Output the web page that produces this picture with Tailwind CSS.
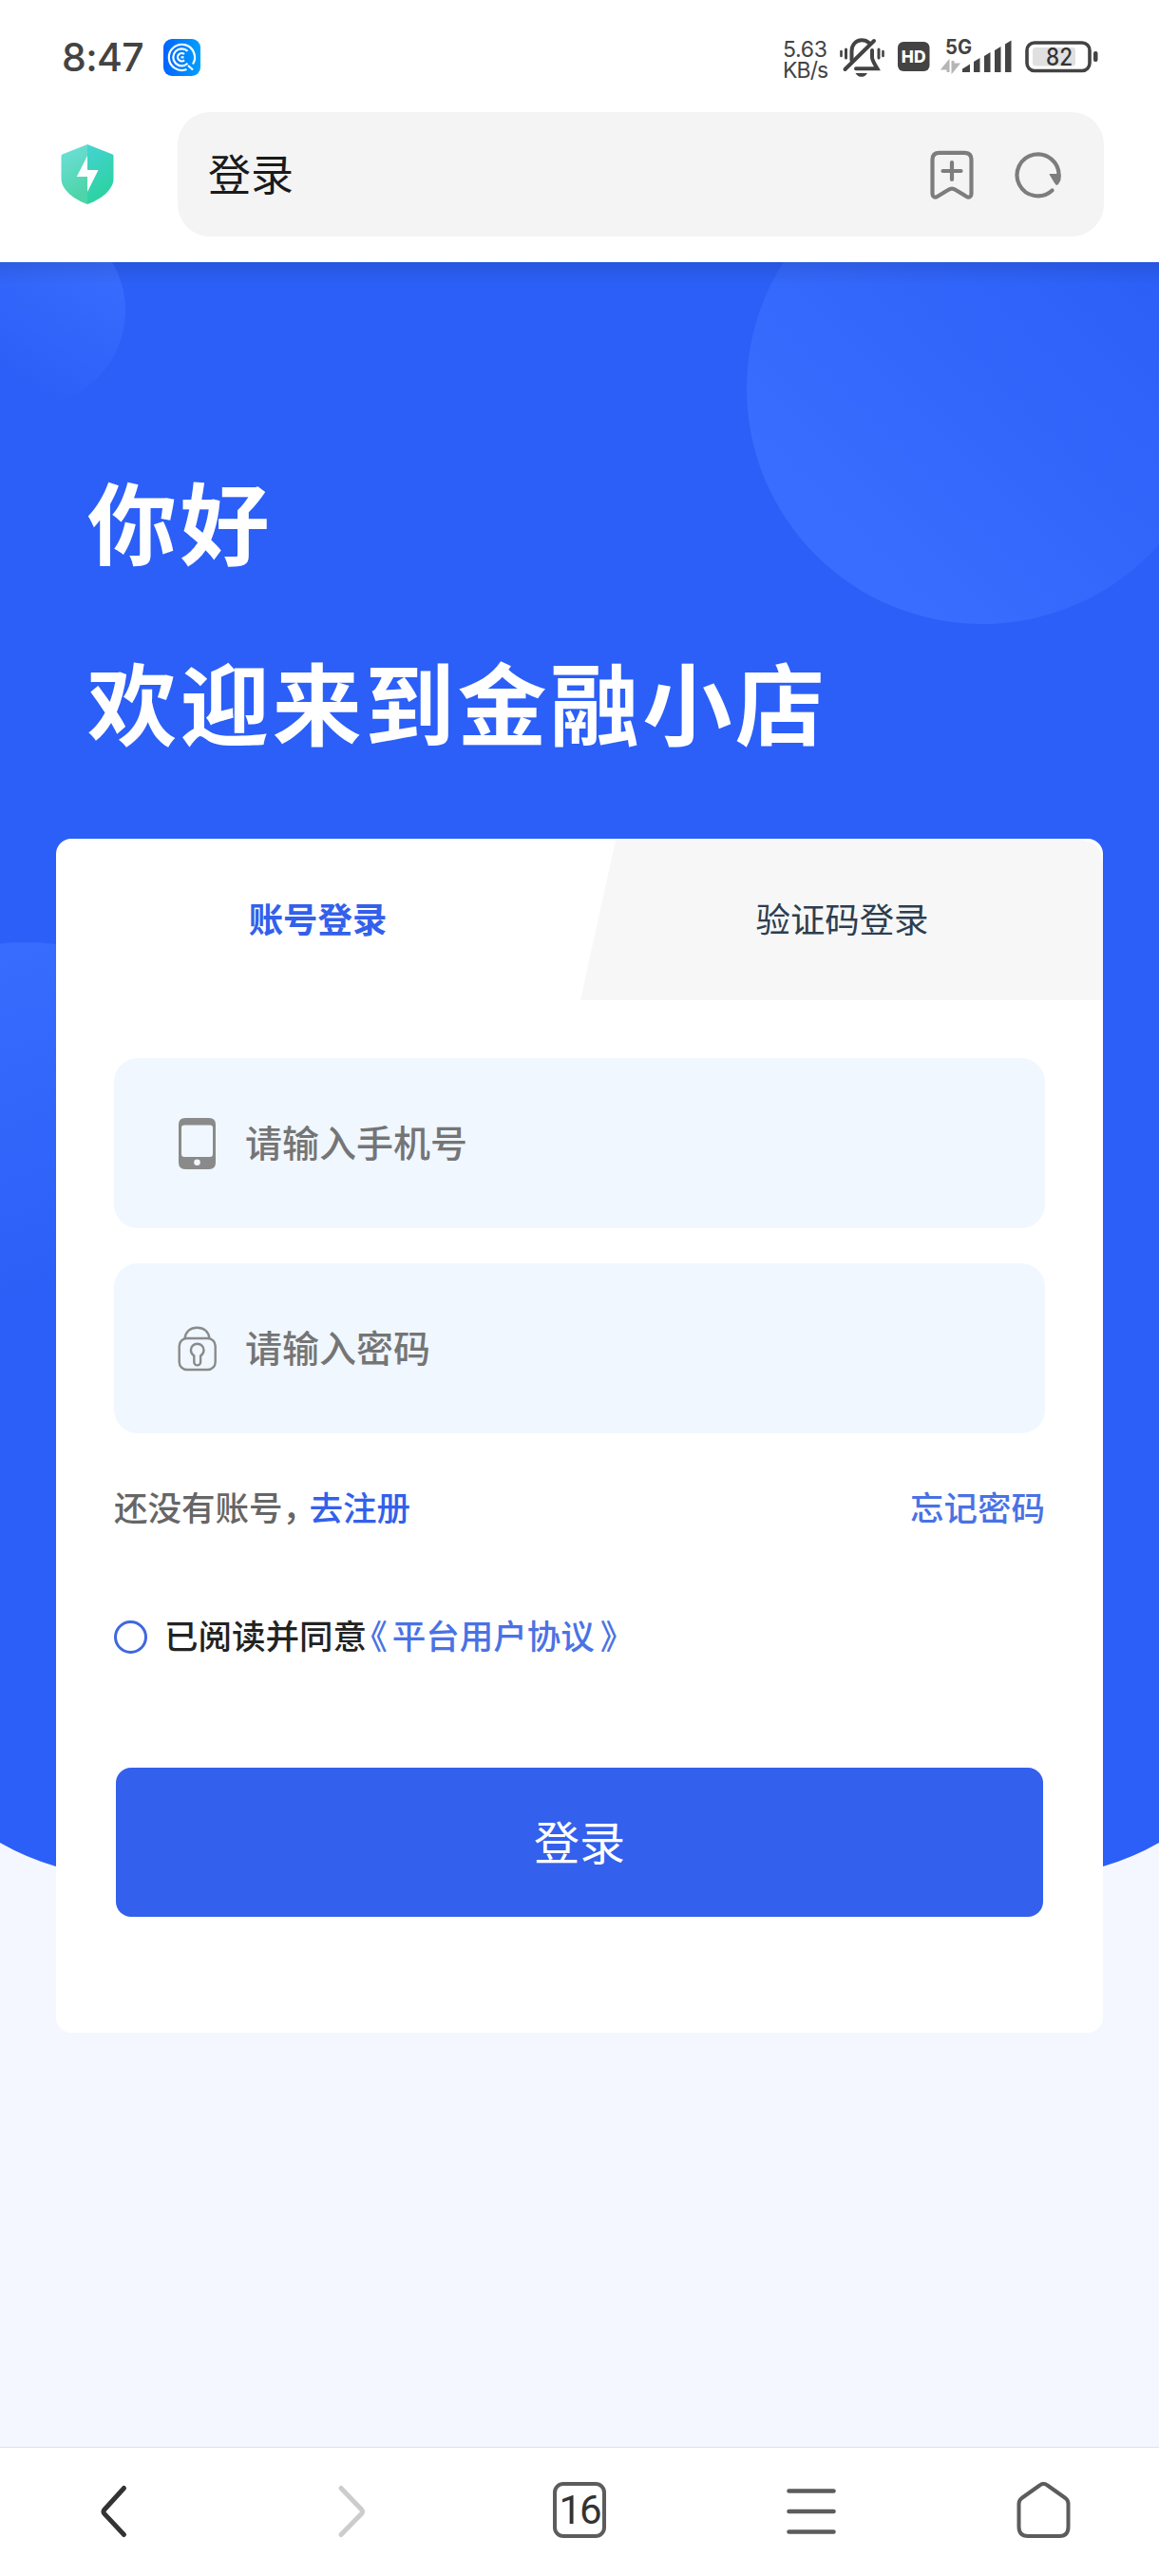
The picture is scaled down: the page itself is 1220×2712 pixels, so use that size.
<!DOCTYPE html>
<html lang="zh-CN">
<head>
    <meta charset="UTF-8">
    <meta name="viewport" content="width=device-width, initial-scale=1.0">
    <title>登录</title>
    <script src="https://cdn.jsdelivr.net/npm/@tailwindcss/browser@4"></script>
</head>
<body class="w-[1220px] h-[2712px] overflow-hidden flex flex-col bg-white font-['Inter','Noto_Sans_CJK_SC',sans-serif]">

    <!-- 状态栏 -->
    <div class="h-[118px] shrink-0 flex items-start justify-between pl-[65px] pr-[64px] pt-[38px] text-[#434343]">
        <div class="flex items-center">
            <span class="w-[107px] text-[41px] leading-[44px] font-medium -tracking-[0.6px]">8:47</span>
            <svg class="w-[39px] h-[39px]" viewBox="0 0 39 39" fill="none">
                <defs><linearGradient id="logo"><stop stop-color="#0064ff"/><stop offset="1" stop-color="#00a0ff"/></linearGradient></defs>
                <rect width="39" height="39" rx="9" fill="url(#logo)"/>
                <g stroke="#fff" stroke-width="2.2">
                    <path d="M31 26.5A13.6 13.6 0 1 0 24.5 32"/>
                    <path d="M25.5 12.8a9 9 0 1 0 0 13"/>
                    <path d="M22 16a4.2 4.2 0 1 0 0 6.4"/>
                    <path d="M21.5 19.3h-3" />
                    <path d="M26 28l5 4.5"/>
                </g>
            </svg>
        </div>
        <div class="flex items-start">
            <div class="w-[59px] pt-[3px] text-[23px] leading-[22px]">
                <div class="-tracking-[0.3px]">5.63</div>
                <div class="-tracking-[0.9px]">KB/s</div>
            </div>
            <svg class="w-[273px] h-[44px]" viewBox="0 0 273 44" fill="none">
                <!-- 静音铃铛 -->
                <g stroke="#434343" stroke-width="4" stroke-linecap="round">
                    <path d="M13.5 25.5V16C13.5 9 18 4.2 24 4.2c3.2 0 5.8 1 7.6 2.8"/>
                    <path d="M6.500 35L37 5"/>
                    <path d="M35 15v7.500c0 3 2 5.500 5.500 11.800H18"/>
                    <path d="M7.500 14v9M42 14v9" stroke-width="3"/>
                    <path d="M2.500 16v5M46.500 16v5" stroke-width="2.600"/>
                </g>
                <path d="M17.500 39h12.500c-1.500 3-4 3.800-6.200 3.800S19 42 17.500 39z" fill="#434343"/>
                <!-- HD -->
                <rect x="62" y="6" width="33.500" height="31" rx="6" fill="#434343"/>
                <text x="78.700" y="27.500" text-anchor="middle" fill="#fff" font-size="17.500" font-weight="800">HD</text>
                <!-- 5G 信号 -->
                <text x="112" y="18.500" fill="#434343" font-size="21" font-weight="700" textLength="28" lengthAdjust="spacingAndGlyphs">5G</text>
                <path d="M115 38V28l-5 6h5M120 26v10l5-6h-5" stroke="#b5b5b5" stroke-width="3"/>
                <g fill="#434343">
                    <path d="M130 34.500l8-5V38h-8zM142 27l6.500-4V38H142zM153 21l6.500-4V38H153zM164 15l6.500-4V38H164zM175 8.500l6.500-4V38H175z"/>
                </g>
                <!-- 电池 -->
                <rect x="198" y="7" width="66" height="29.500" rx="8" stroke="#434343" stroke-width="3.600"/>
                <rect x="204" y="12" width="45" height="19.500" rx="3" fill="#e0e0e0"/>
                <rect x="268" y="16" width="4.500" height="11" rx="2" fill="#434343"/>
                <text x="232" y="31" text-anchor="middle" fill="#333" font-size="25" font-weight="500" textLength="28" lengthAdjust="spacingAndGlyphs">82</text>
            </svg>
        </div>
    </div>

    <!-- 地址栏 -->
    <div class="h-[158px] shrink-0 flex items-start pl-[64px] pr-[58px]">
        <svg class="w-[56px] h-[64px] mt-[34px] mr-[67px] shrink-0" viewBox="0 0 56 64">
            <defs>
                <linearGradient id="sl" x1="0" y1="0" x2="0.300" y2="1"><stop stop-color="#6fe0dc"/><stop offset="1" stop-color="#4dd4a8"/></linearGradient>
                <linearGradient id="sr" x1="0" y1="0" x2="0.300" y2="1"><stop stop-color="#46d3d3"/><stop offset="1" stop-color="#2bd2a0"/></linearGradient>
            </defs>
            <path d="M28 0L1.500 10.500Q.5 11 .5 12v24C.5 48 14 58 28 63z" fill="url(#sl)"/>
            <path d="M28 0l26.500 10.500q1 .5 1 1.500v24C55.500 48 42 58 28 63z" fill="url(#sr)"/>
            <path d="M28 12L16.800 34H28v16l11.500-23H28z" fill="#fff"/>
        </svg>
        <div class="flex-1 h-[131px] rounded-[34px] bg-[#f4f4f4] flex items-center pl-8 pr-[44px]">
            <span class="flex-1 pt-[3px] text-[45px] leading-[64px] text-[#1a1a1a]">登录</span>
            <svg class="w-[46px] h-[52px] mr-[43px]" viewBox="0 0 46 52" fill="none" stroke="#7d7d7d" stroke-width="4.200" stroke-linecap="round" stroke-linejoin="round">
                <path d="M2.500 46V10Q2.500 2.800 10 2.800h26Q43.500 2.800 43.500 10v36c0 3-2.500 4.500-5 3L27 42q-4-2.600-8 0L7.500 49c-2.500 1.500-5 0-5-3z"/>
                <path d="M23 13v18M13.500 22h19"/>
            </svg>
            <svg class="w-[50px] h-[50px]" viewBox="0 0 50 50" fill="none">
                <path d="M39.500 41.500A22 22 0 1 1 46.500 27" stroke="#7d7d7d" stroke-width="4.200" stroke-linecap="round"/>
                <path d="M37 24.500h11v6l-2.500 4.500q-1.500 1-2.500-.5z" fill="#7d7d7d" stroke="#7d7d7d"/>
            </svg>
        </div>
    </div>

    <!-- 登录页内容 -->
    <main class="relative flex-1 overflow-hidden bg-[#f4f7ff] px-[59px] pt-[183px]">
        <!-- 背景 -->
        <svg class="absolute left-0 top-0 w-[1220px] h-[2300px]" viewBox="0 276 1220 2300" fill="none">
            <defs>
                <linearGradient id="c1" x1="0.850" y1="0.150" x2="0.400" y2="0.850"><stop stop-color="#396dff"/><stop offset="1" stop-color="#396dff" stop-opacity="0"/></linearGradient>
                <linearGradient id="c2" x1="0.200" y1="0.800" x2="0.800" y2="0.200"><stop stop-color="#396dff"/><stop offset="1" stop-color="#396dff" stop-opacity="0"/></linearGradient>
                <linearGradient id="c3" x1="0.300" y1="0" x2="0.550" y2="0.740"><stop stop-color="#396dff"/><stop offset="1" stop-color="#396dff" stop-opacity="0"/></linearGradient>
                <linearGradient id="top" x1="0" y1="0" x2="0" y2="1"><stop stop-color="#000" stop-opacity=".1"/><stop offset="1" stop-color="#000" stop-opacity="0"/></linearGradient>
            </defs>
            <path d="M0 276H1220V1940Q1192 1956 1161 1965L1100 1985H120L59 1965Q28 1956 0 1940z" fill="#2b5ff7"/>
            <circle cx="32" cy="327" r="100" fill="url(#c1)"/>
            <circle cx="1034" cy="409" r="248" fill="url(#c2)"/>
            <circle cx="27" cy="1240" r="248" fill="url(#c3)"/>
            <rect y="276" width="1220" height="24" fill="url(#top)"/>
        </svg>

        <div class="relative">
            <h1 class="pl-[33px] h-[424px] text-[94px] leading-[190px] font-bold tracking-[3.4px] text-white">你好<br>欢迎来到金融小店</h1>

            <!-- 登录卡片 -->
            <div class="h-[1257px] rounded-2xl bg-white overflow-hidden">
                <div class="relative h-[170px] flex">
                    <svg class="absolute right-0 top-0 w-[550px] h-[170px]" viewBox="0 0 550 170"><path d="M37 1.500H524Q550 1.500 550 28V170H0z" fill="#f7f7f7"/></svg>
                    <div class="relative w-1/2 flex items-center justify-center pt-[2px] text-[36.4px] font-bold text-[#3360eb]">账号登录</div>
                    <div class="relative w-1/2 flex items-center justify-center pt-[2px] text-[36.4px] text-[#2c3e50] pl-[2px]">验证码登录</div>
                </div>

                <form class="pl-[61px] pr-[61px] pt-[61px]">
                    <div class="h-[179px] rounded-[25px] bg-[#f0f7ff] flex items-center pl-[68px]">
                        <svg class="w-[39px] h-[54px] mr-[31px]" viewBox="0 0 39 54" fill="#8a8a8a"><path fill-rule="evenodd" d="M7 0h25q7 0 7 7v40q0 7-7 7H7q-7 0-7-7V7Q0 0 7 0zM6 7.500q-3 0-3 3V38q0 3 3 3h27q3 0 3-3V10.500q0-3-3-3zM19.500 43.500a3.300 3.300 0 1 0 0 6.600 3.300 3.300 0 0 0 0-6.600z"/></svg>
                        <span class="pt-px text-[39px] leading-[56px] font-medium text-[#757575]">请输入手机号</span>
                    </div>
                    <div class="mt-[37px] h-[179px] rounded-[25px] bg-[#f0f7ff] flex items-center pl-[67px]">
                        <svg class="w-[41px] h-[48px] mr-[30px]" viewBox="0 0 41 48" fill="none" stroke="#8a8a8a" stroke-width="2.400">
                            <rect x="1.700" y="13" width="38" height="33" rx="8"/>
                            <path d="M7.500 13C8.500 6 13.500 1.700 20.500 1.700S32.500 6 33.500 13"/>
                            <path d="M17.300 31.500v6.500a3.400 3.400 0 0 0 6.800 0v-6.500c2-1.500 3.400-3.500 3.400-6a6.800 6.800 0 1 0-13.600 0c0 2.500 1.400 4.500 3.400 6z"/>
                        </svg>
                        <span class="pt-px text-[39px] leading-[56px] font-medium text-[#757575]">请输入密码</span>
                    </div>

                    <div class="mt-[55px] h-[50px] flex justify-between items-center text-[35.5px] font-medium">
                        <div class="flex items-center text-[#666]">还没有账号<span class="w-[28px] [font-feature-settings:'halt']">，</span><a href="#" class="text-[#3360eb]">去注册</a></div>
                        <a href="#" class="text-[#4a72e4]">忘记密码</a>
                    </div>

                    <div class="mt-[83px] h-[52px] flex items-center text-[35.5px] font-medium text-[#222]">
                        <span class="w-[35px] h-[35px] rounded-full border-3 border-[#3f67df] mr-[18px]"></span>
                        <span class="pt-[2px]">已阅读并同意</span>
                        <span class="pt-[2px] text-[#4a72e4] pl-[4px]"><span class="[font-feature-settings:'halt'] pr-[5px]">《</span>平台用户协议<span class="[font-feature-settings:'halt'] pl-[6px]">》</span></span>
                    </div>

                    <button type="button" class="mt-[112px] ml-[2px] w-[976px] h-[157px] rounded-2xl bg-[#3360ec] text-white text-[48px] pt-[3px]">登录</button>
                </form>
            </div>
        </div>
    </main>

    <!-- 底部导航 -->
    <nav class="h-[136px] shrink-0 border-t border-[#e2e2e2] bg-white grid grid-cols-5 justify-items-center pt-[36px]">
        <svg class="w-[60px] h-[60px]" viewBox="0 0 60 60" fill="none" stroke="#333" stroke-width="5" stroke-linecap="round" stroke-linejoin="round"><path d="M38.500 6.500L18 29q-2 2.300 0 4.600L38.500 55.500"/></svg>
        <svg class="w-[60px] h-[60px]" viewBox="0 0 60 60" fill="none" stroke="#ccc" stroke-width="5" stroke-linecap="round" stroke-linejoin="round"><path d="M23 6.500L44.500 29q2 2.300 0 4.600L23 55.500"/></svg>
        <div class="w-[56px] h-[59px] rounded-[11px] border-4 border-[#5c5c5c] flex items-center justify-center font-['Roboto'] text-[42px] text-[#333] -tracking-[2px]">16</div>
        <svg class="w-[52px] h-[60px]" viewBox="0 0 52 60" stroke="#5c5c5c" stroke-width="4.600" stroke-linecap="round"><path d="M2.500 9.500h47M2.500 31h47M2.500 52.500h47"/></svg>
        <svg class="w-[57px] h-[60px]" viewBox="0 0 57 60" fill="none" stroke="#5c5c5c" stroke-width="4" stroke-linejoin="round"><path d="M24.500 3.500q4-3 8 0L51.500 17q3 2.300 3 6V47q0 10-9 10H12q-9.500 0-9.500-10V23q0-3.700 3-6z"/></svg>
    </nav>
</body>
</html>
